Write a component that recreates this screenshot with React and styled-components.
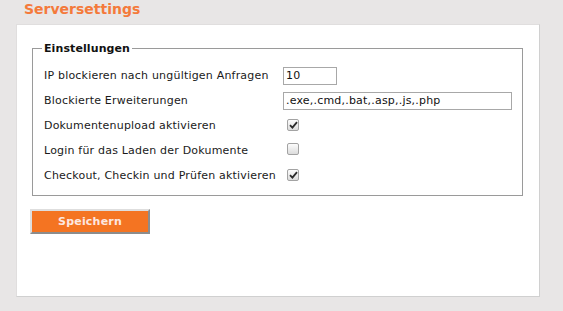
import React from 'react';
import styled, { createGlobalStyle } from 'styled-components';

const GlobalStyle = createGlobalStyle`
  html, body {
    margin: 0;
    padding: 0;
    background: #e8e6e6;
  }
  body {
    font-family: 'DejaVu Sans', Verdana, sans-serif;
    font-size: 11px;
    color: #1a1a1a;
  }
`;

const Page = styled.div`
  width: 563px;
  height: 311px;
  overflow: hidden;
`;

const Title = styled.h1`
  margin: 0;
  padding: 1px 0 0 24px;
  height: 24px;
  box-sizing: border-box;
  font-size: 14px;
  font-weight: bold;
  color: #f47a3b;
`;

const Panel = styled.div`
  margin-left: 16px;
  width: 524px;
  height: 273px;
  box-sizing: border-box;
  background: #fff;
  border: 1px solid #d0d0d0;
  border-top-color: #e0dede;
  border-left-color: #e0dede;
  padding: 17px 16px 0 15px;
`;

const Fieldset = styled.fieldset`
  margin: 0;
  padding: 8px 0 7px 11px;
  border: 1px solid #9a9a9a;
  min-width: 0;
`;

const Legend = styled.legend`
  padding: 0 2px;
  margin-left: -2px;
  font-weight: bold;
  font-size: 11px;
  letter-spacing: 0.1px;
  color: #111;
`;

const Grid = styled.div`
  display: grid;
  grid-template-columns: 239px 1fr;
  grid-auto-rows: 25px;
  align-items: center;
`;

const Label = styled.div`
  white-space: nowrap;
  letter-spacing: 0.2px;
`;

const TextInput = styled.input`
  box-sizing: border-box;
  width: ${({ $w }) => $w}px;
  height: 18px;
  margin: 0;
  padding: 0 2px;
  border: 1px solid #a8a8a8;
  font-family: 'DejaVu Sans', Verdana, sans-serif;
  font-size: 11px;
  letter-spacing: 0.2px;
  color: #111;
  outline: none;
`;

const Check = styled.span`
  display: inline-flex;
  align-items: center;
  justify-content: center;
  box-sizing: border-box;
  width: 12px;
  height: 12px;
  margin-left: 4px;
  border: 1px solid #a3a3a3;
  border-radius: 2px;
  background: linear-gradient(#fcfcfc, #dcdcdc);
`;

const Button = styled.button`
  display: block;
  margin: 13px 0 0 -2px;
  width: 120px;
  height: 25px;
  box-sizing: border-box;
  background: #f47422;
  color: #fde7e0;
  font-family: 'DejaVu Sans', Verdana, sans-serif;
  font-weight: bold;
  font-size: 11px;
  letter-spacing: 0.2px;
  border: 2px solid;
  border-color: #dedede #8c8c8c #8c8c8c #dedede;
  padding: 0;
  cursor: pointer;
`;

const CheckBox = ({ checked }) => (
  <Check>
    {checked && (
      <svg width="9" height="8" viewBox="0 0 9 8">
        <path d="M1 4.2 L3.4 6.6 L8 1.2" fill="none" stroke="#2a2a2a" strokeWidth="1.8" />
      </svg>
    )}
  </Check>
);

export default function App() {
  return (
    <Page>
      <GlobalStyle />
      <Title>Serversettings</Title>
      <Panel>
        <Fieldset>
          <Legend>Einstellungen</Legend>
          <Grid>
            <Label>IP blockieren nach ungültigen Anfragen</Label>
            <div><TextInput $w={54} defaultValue="10" /></div>
            <Label>Blockierte Erweiterungen</Label>
            <div><TextInput $w={229} defaultValue=".exe,.cmd,.bat,.asp,.js,.php" /></div>
            <Label>Dokumentenupload aktivieren</Label>
            <div><CheckBox checked /></div>
            <Label>Login für das Laden der Dokumente</Label>
            <div><CheckBox /></div>
            <Label>Checkout, Checkin und Prüfen aktivieren</Label>
            <div><CheckBox checked /></div>
          </Grid>
        </Fieldset>
        <Button>Speichern</Button>
      </Panel>
    </Page>
  );
}
